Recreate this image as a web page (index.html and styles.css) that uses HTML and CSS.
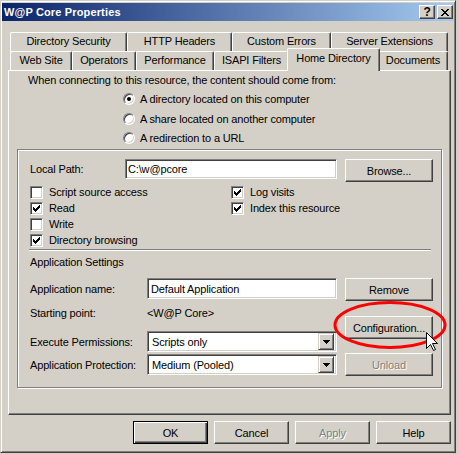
FILE: index.html
```html
<!DOCTYPE html>
<html>
<head>
<meta charset="utf-8">
<title>W@P Core Properties</title>
<link rel="stylesheet" href="styles.css">
</head>
<body>
<div class="window">
  <div class="titlebar">
    <span class="title">W@P Core Properties</span>
    <div class="caption-btns">
      <span class="cbtn">?</span>
      <span class="cbtn"><svg width="8" height="7" viewBox="0 0 8 7"><path d="M0 0h2v1h1v1h2v-1h1v-1h2v1h-1v1h-1v1h-1v1h1v1h1v1h1v1h-2v-1h-1v-1h-2v1h-1v1h-2v-1h1v-1h1v-1h1v-1h-1v-1h-1v-1h-1z" fill="#000"/></svg></span>
    </div>
  </div>
  <div class="dialog">
    <div class="tabs">
      <div class="tabrow">
        <div class="tab w117">Directory Security</div>
        <div class="tab w105">HTTP Headers</div>
        <div class="tab w99">Custom Errors</div>
        <div class="tab w117">Server Extensions</div>
      </div>
      <div class="tabrow">
        <div class="tab w62">Web Site</div>
        <div class="tab w64">Operators</div>
        <div class="tab w78">Performance</div>
        <div class="tab w75">ISAPI Filters</div>
        <div class="tab sel">Home Directory</div>
        <div class="tab w70">Documents</div>
      </div>
    </div>
    <div class="panel">
      <div class="prompt">When connecting to this resource, the content should come from:</div>
      <div class="radios">
        <div class="radio-row first"><span class="radio on"></span>A directory located on this computer</div>
        <div class="radio-row"><span class="radio"></span>A share located on another computer</div>
        <div class="radio-row"><span class="radio"></span>A redirection to a URL</div>
      </div>
      <div class="group">
        <div class="pathrow">
          <span class="lbl path-lbl">Local Path:</span>
          <div class="field path-field">C:\w@pcore</div>
          <div class="btn wide">Browse...</div>
        </div>
        <div class="checks">
          <div class="chkcol left">
            <div class="chk-row"><span class="chk"></span>Script source access</div>
            <div class="chk-row"><span class="chk"><svg width="7" height="7" viewBox="0 0 7 7"><path d="M0 2h1v3H0zM1 3h1v3H1zM2 4h1v3H2zM3 3h1v3H3zM4 2h1v3H4zM5 1h1v3H5zM6 0h1v3H6z" fill="#000"/></svg></span>Read</div>
            <div class="chk-row"><span class="chk"></span>Write</div>
            <div class="chk-row"><span class="chk"><svg width="7" height="7" viewBox="0 0 7 7"><path d="M0 2h1v3H0zM1 3h1v3H1zM2 4h1v3H2zM3 3h1v3H3zM4 2h1v3H4zM5 1h1v3H5zM6 0h1v3H6z" fill="#000"/></svg></span>Directory browsing</div>
          </div>
          <div class="chkcol">
            <div class="chk-row"><span class="chk"><svg width="7" height="7" viewBox="0 0 7 7"><path d="M0 2h1v3H0zM1 3h1v3H1zM2 4h1v3H2zM3 3h1v3H3zM4 2h1v3H4zM5 1h1v3H5zM6 0h1v3H6z" fill="#000"/></svg></span>Log visits</div>
            <div class="chk-row"><span class="chk"><svg width="7" height="7" viewBox="0 0 7 7"><path d="M0 2h1v3H0zM1 3h1v3H1zM2 4h1v3H2zM3 3h1v3H3zM4 2h1v3H4zM5 1h1v3H5zM6 0h1v3H6z" fill="#000"/></svg></span>Index this resource</div>
          </div>
        </div>
        <div class="sep"></div>
        <div class="appset">Application Settings</div>
        <div class="appgrid">
          <div class="appleft">
            <div class="arow">
              <span class="lbl app-lbl">Application name:</span>
              <div class="field app-field">Default Application</div>
            </div>
            <div class="srow">
              <span class="lbl app-lbl">Starting point:</span>
              <span class="spval">&lt;W@P Core&gt;</span>
            </div>
            <div class="arow exec">
              <span class="lbl app-lbl">Execute Permissions:</span>
              <div class="field combo"><span>Scripts only</span><span class="ddbtn"><svg width="7" height="4" viewBox="0 0 7 4"><path d="M0 0h7v1H0zM1 1h5v1H1zM2 2h3v1H2zM3 3h1v1H3z" fill="#000"/></svg></span></div>
            </div>
            <div class="arow prot">
              <span class="lbl app-lbl">Application Protection:</span>
              <div class="field combo"><span>Medium (Pooled)</span><span class="ddbtn"><svg width="7" height="4" viewBox="0 0 7 4"><path d="M0 0h7v1H0zM1 1h5v1H1zM2 2h3v1H2zM3 3h1v1H3z" fill="#000"/></svg></span></div>
            </div>
          </div>
          <div class="appright">
            <div class="btn wide">Remove</div>
            <div class="btn wide config">Configuration...</div>
            <div class="btn wide unload disabled">Unload</div>
          </div>
        </div>
      </div>
    </div>
    <div class="footer">
      <div class="btn default">OK</div>
      <div class="btn">Cancel</div>
      <div class="btn disabled">Apply</div>
      <div class="btn">Help</div>
    </div>
  </div>
</div>
<svg class="annot" width="459" height="454" viewBox="0 0 459 454">
  <ellipse cx="390" cy="325" rx="55" ry="22.5" fill="none" stroke="#ff0000" stroke-width="3"/>
  <path d="M426.5 332.5V348.5L430.5 344.5L433.5 350.5L435.5 349.5L432.5 343.5H437.5Z" fill="#fff" stroke="#000" stroke-width="1"/>
</svg>
</body>
</html>
```
FILE: styles.css
```css
* { box-sizing: border-box; }
html, body { margin: 0; padding: 0; }
body {
  background: #d4d0c8;
  font-family: "Liberation Sans", Arial, sans-serif;
  font-size: 11px;
  letter-spacing: -0.15px;
  color: #000;
  width: 459px;
  height: 454px;
  overflow: hidden;
  position: relative;
}
.window {
  width: 456px;
  height: 453px;
  border: 1px solid;
  border-color: #d4d0c8 #404040 #404040 #d4d0c8;
  box-shadow: inset 1px 1px #fff, inset -1px -1px #808080;
  padding: 2px 1px 0 1px;
  background: #d4d0c8;
}
.titlebar {
  height: 18px;
  display: flex;
  align-items: center;
  justify-content: space-between;
  background: linear-gradient(to right, #0a246a, #a6caf0);
  padding: 0 1px 0 2px;
}
.title { color: #fff; font-weight: bold; font-size: 11px; letter-spacing: 0.15px; }
.caption-btns { display: flex; gap: 2px; }
.cbtn {
  width: 16px; height: 14px;
  border: 1px solid;
  border-color: #fff #404040 #404040 #fff;
  box-shadow: inset -1px -1px #808080;
  background: #d4d0c8;
  display: flex; align-items: center; justify-content: center;
  font-weight: bold; font-size: 12px; line-height: 1;
}
.dialog { padding: 11px 0 0 6px; }
.tabs { margin-left: 2px; }
.tabrow { display: flex; height: 19px; }
.tab {
  height: 19px;
  border-top: 1px solid #fff;
  border-left: 1px solid #fff;
  border-right: 1px solid #404040;
  box-shadow: inset -1px 0 #808080;
  border-radius: 2px 2px 0 0;
  text-align: center;
  line-height: 17px;
  background: #d4d0c8;
  white-space: nowrap;
}
.w117 { width: 117px; }
.w105 { width: 105px; }
.w99 { width: 99px; }
.w62 { width: 62px; }
.w64 { width: 64px; }
.w78 { width: 78px; }
.w75 { width: 75px; }
.w70 { width: 70px; }
.tab.sel {
  width: 93px;
  height: 23px;
  margin: -3px -2px 0 -2px;
  position: relative;
  z-index: 1;
  line-height: 19px;
}
.panel {
  width: 443px;
  height: 345px;
  border: 1px solid;
  border-color: #fff #404040 #404040 #fff;
  box-shadow: inset -1px -1px #808080;
}
.prompt { height: 18px; line-height: 18px; padding-left: 19px; }
.radios { padding-left: 114px; }
.radio-row { display: flex; align-items: center; height: 19px; }
.radio-row.first { height: 20px; }
.radio {
  width: 12px; height: 12px;
  border-radius: 50%;
  background: #fff;
  border: 1px solid;
  border-color: #808080 #fff #fff #808080;
  box-shadow: inset 1px 1px #404040, inset -1px -1px #d4d0c8;
  margin-right: 5px;
  position: relative;
}
.radio.on::after {
  content: "";
  position: absolute;
  left: 3px; top: 3px;
  width: 4px; height: 4px;
  border-radius: 50%;
  background: #000;
}
.group {
  width: 425px;
  height: 239px;
  margin: 2px 0 0 8px;
  border: 1px solid #808080;
  box-shadow: inset 1px 1px #fff, 1px 1px #fff;
  padding: 9px 0 0 12px;
}
.pathrow { display: flex; height: 23px; }
.path-lbl { width: 95px; line-height: 21px; }
.field {
  background: #fff;
  border: 1px solid;
  border-color: #808080 #fff #fff #808080;
  box-shadow: inset 1px 1px #404040, inset -1px -1px #d4d0c8;
  padding-left: 2px;
  display: flex;
  align-items: center;
  height: 20px;
  white-space: nowrap;
}
.path-field { width: 212px; }
.btn {
  width: 75px;
  height: 23px;
  background: #d4d0c8;
  border: 1px solid;
  border-color: #fff #404040 #404040 #fff;
  box-shadow: inset -1px -1px #808080;
  display: flex;
  align-items: center;
  justify-content: center;
  white-space: nowrap;
}
.btn.wide { width: 88px; }
.pathrow .btn { margin-left: 8px; }
.btn.default {
  border-color: #000;
  box-shadow: inset 1px 1px #fff, inset -1px -1px #404040, inset -2px -2px #808080;
}
.btn.disabled { color: #808080; text-shadow: 1px 1px #fff; }
.checks { display: flex; margin-top: 4px; }
.chkcol.left { width: 201px; }
.chk-row { display: flex; align-items: flex-start; height: 16px; line-height: 13px; }
.chk {
  width: 13px; height: 13px;
  flex: none;
  background: #fff;
  border: 1px solid;
  border-color: #808080 #fff #fff #808080;
  box-shadow: inset 1px 1px #404040, inset -1px -1px #d4d0c8;
  margin-right: 6px;
  display: flex;
  align-items: center;
  justify-content: center;
}
.sep {
  width: 402px;
  height: 2px;
  border-top: 1px solid #808080;
  border-bottom: 1px solid #fff;
  margin: -1px 0 0 -1px;
}
.appset { margin-top: 5px; line-height: 13px; }
.appgrid { display: flex; margin-top: 9px; }
.appleft { width: 315px; }
.arow { display: flex; align-items: center; height: 21px; }
.app-lbl { width: 117px; flex: none; }
.app-field { width: 190px; height: 21px; padding-left: 3px; }
.srow { display: flex; height: 14px; line-height: 14px; margin-top: 7px; }
.arow.exec { margin-top: 11px; }
.arow.prot { margin-top: 2px; }
.combo {
  width: 190px;
  height: 21px;
  padding-left: 4px;
  padding-right: 2px;
  justify-content: space-between;
}
.ddbtn {
  width: 16px; height: 17px;
  background: #d4d0c8;
  border: 1px solid;
  border-color: #d4d0c8 #404040 #404040 #d4d0c8;
  box-shadow: inset 1px 1px #fff, inset -1px -1px #808080;
  display: flex; align-items: center; justify-content: center;
}
.appright { display: flex; flex-direction: column; }
.btn.config { margin-top: 15px; }
.btn.unload { margin-top: 14px; }
.footer {
  display: flex;
  justify-content: flex-end;
  gap: 6px;
  width: 443px;
  margin-top: 6px;
}
.annot { position: absolute; left: 0; top: 0; pointer-events: none; }
```
